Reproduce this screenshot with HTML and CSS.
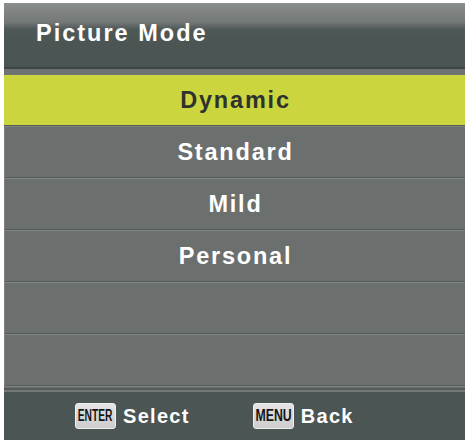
FILE: index.html
```html
<!DOCTYPE html>
<html>
<head>
<meta charset="utf-8">
<link rel="stylesheet" href="styles.css">
</head>
<body>
<div class="panel">
  <div class="header">Picture Mode</div>
  <div class="strip"></div>
  <div class="list">
    <div class="row selected">Dynamic</div>
    <div class="row">Standard</div>
    <div class="row">Mild</div>
    <div class="row">Personal</div>
    <div class="row"></div>
    <div class="row"></div>
  </div>
  <div class="bottom-strip"></div>
  <div class="footer">
    <div class="hint hint-select">
      <span class="key"><span class="key-text key-enter">ENTER</span></span>
      <span class="label">Select</span>
    </div>
    <div class="hint">
      <span class="key"><span class="key-text key-menu">MENU</span></span>
      <span class="label">Back</span>
    </div>
  </div>
</div>
</body>
</html>
```
FILE: styles.css
```css
html, body {
  margin: 0;
  padding: 0;
  background: #ffffff;
}
body {
  width: 468px;
  height: 440px;
  overflow: hidden;
  font-family: "Liberation Sans", Arial, sans-serif;
}
.panel {
  margin: 3px 3px 0 4px;
  width: 461px;
  height: 437px;
  display: flex;
  flex-direction: column;
}
.header {
  height: 64px;
  box-sizing: border-box;
  padding: 19px 0 0 32px;
  font-size: 23.5px;
  line-height: 23px;
  font-weight: bold;
  letter-spacing: 2px;
  color: #ffffff;
  background: linear-gradient(to bottom, #8a8e8d 0px, #7b807f 12px, #747978 19px, #5f6665 23px, #4e5856 27px, #4b5553 40px, #4a5452 64px);
}
.strip {
  height: 8px;
  box-sizing: border-box;
  border-top: 2px solid #3e4548;
  background: #6e7371;
}
.list {
  display: flex;
  flex-direction: column;
}
.row {
  height: 52px;
  box-sizing: border-box;
  padding-bottom: 2px;
  padding-left: 2px;
  line-height: 50px;
  text-align: center;
  font-size: 23.5px;
  font-weight: bold;
  letter-spacing: 1.8px;
  color: #ffffff;
  background: linear-gradient(to bottom, #6b706f 0px, #6b706f 50px, #555b5a 50px, #555b5a 51px, #80857f 51px, #80857f 52px);
  box-shadow: inset 1px 0 0 #7c817f;
}
.row.selected {
  color: #2d322e;
  background: linear-gradient(to bottom, #cbd63f 0px, #cbd63f 50px, #555b5a 50px, #555b5a 51px, #80857f 51px, #80857f 52px);
  box-shadow: none;
}
.bottom-strip {
  height: 5px;
  background: linear-gradient(to bottom, #676c6b 0px, #676c6b 1px, #555b5a 1px, #555b5a 3px, #737876 3px, #737876 5px);
}
.footer {
  flex: 1;
  display: flex;
  align-items: center;
  padding-left: 71px;
  background: #4b5553;
}
.hint {
  display: flex;
  align-items: center;
  gap: 7px;
}
.hint-select {
  margin-right: 63px;
}
.key {
  width: 41px;
  height: 26px;
  box-sizing: border-box;
  border-radius: 3px;
  background: linear-gradient(to bottom, #e4e4e4, #cdcdcd);
  border: 1px solid #efefef;
  display: flex;
  align-items: center;
  justify-content: center;
  overflow: hidden;
}
.key-text {
  display: inline-block;
  font-size: 16px;
  line-height: 16px;
  font-weight: bold;
  color: #151515;
  letter-spacing: 0;
  white-space: nowrap;
}
.key-enter {
  transform: scaleX(0.64);
}
.key-menu {
  transform: scaleX(0.77);
}
.label {
  font-size: 20px;
  font-weight: bold;
  letter-spacing: 1.3px;
  color: #ffffff;
}
```
